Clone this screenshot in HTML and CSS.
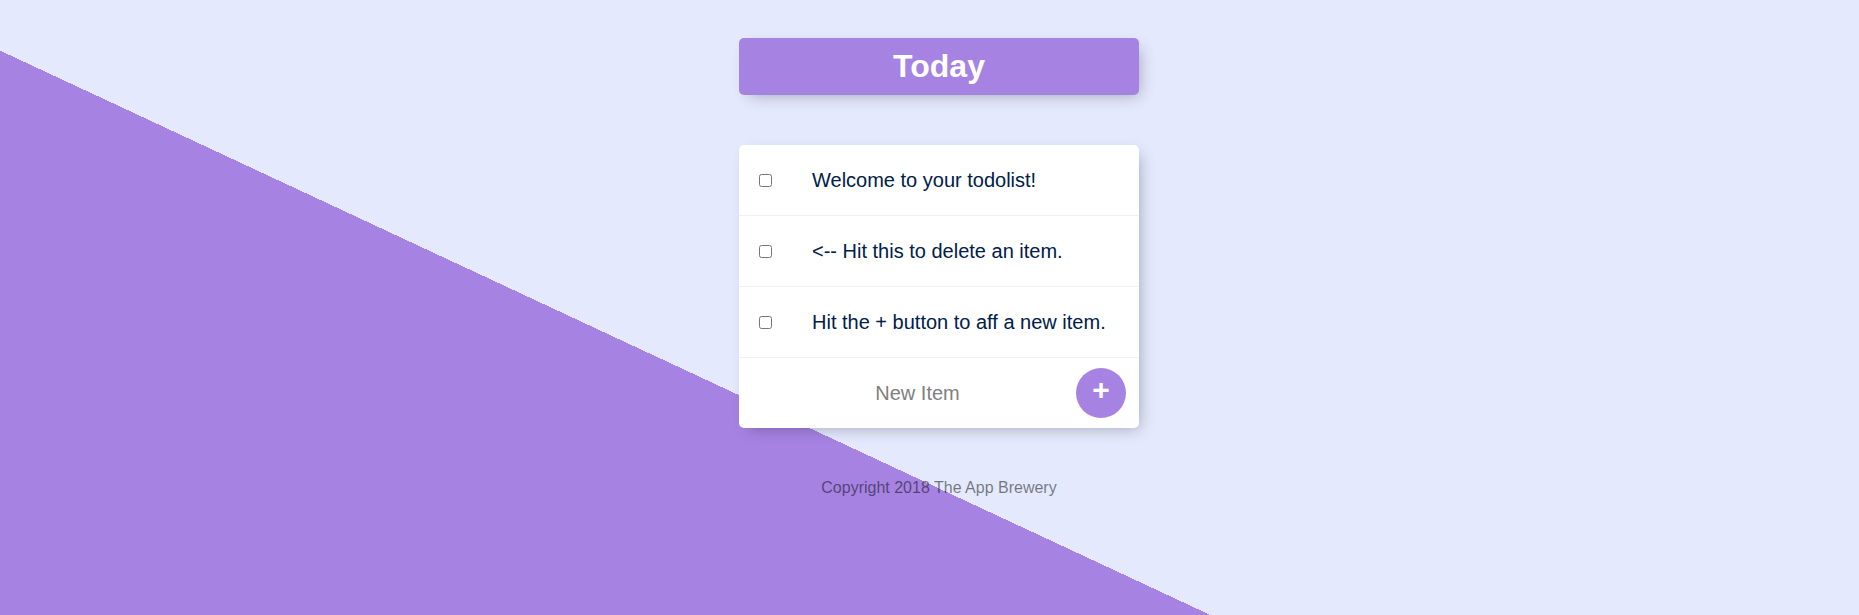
FILE: index.html
```html
<!DOCTYPE html>
<html lang="en">
<head>
<meta charset="utf-8">
<title>To Do List</title>
<link rel="stylesheet" href="styles.css">
</head>
<body>
  <div class="box heading">
    <h1>Today</h1>
  </div>
  <div class="box list">
    <div class="item">
      <input type="checkbox">
      <p>Welcome to your todolist!</p>
    </div>
    <div class="item">
      <input type="checkbox">
      <p>&lt;-- Hit this to delete an item.</p>
    </div>
    <div class="item">
      <input type="checkbox">
      <p>Hit the + button to aff a new item.</p>
    </div>
    <form class="item new-item">
      <input type="text" name="newItem" placeholder="New Item" autocomplete="off">
      <button type="button" name="button">+</button>
    </form>
  </div>
  <footer>Copyright 2018 The App Brewery</footer>
</body>
</html>
```

FILE: styles.css
```css
html {
  background-color: #E4E9FD;
  background-image: linear-gradient(25deg, #A683E3 50%, #E4E9FD 50%);
  background-size: 1859px 968px;
  background-repeat: no-repeat;
  font-family: "Liberation Sans", Arial, Helvetica, sans-serif;
}

body {
  margin: 0;
  padding: 38px 0 0 19px;
}

.box {
  width: 400px;
  margin: 0 auto;
  background: #fff;
  border-radius: 5px;
  box-shadow: 5px 5px 15px -5px rgba(0, 0, 0, 0.3);
}

.heading {
  background-color: #A683E3;
  text-align: center;
  margin-bottom: 50px;
}

.heading h1 {
  margin: 0;
  padding: 10px 10px 11px;
  color: #fff;
  font-size: 32px;
  line-height: 36px;
  font-weight: bold;
}

.list {
  margin-bottom: 51px;
}

.item {
  min-height: 70px;
  display: flex;
  align-items: center;
  border-bottom: 1px solid #F1F1F1;
  margin: 0;
}

.item:last-child {
  border-bottom: 0;
}

.item input[type="checkbox"] {
  margin: 20px;
  width: 13px;
  height: 13px;
}

.item p {
  margin: 0;
  padding: 20px;
  font-size: 20px;
  line-height: 23px;
  color: #00204a;
}

.new-item {
  padding-left: 20px;
}

.new-item input[type="text"] {
  box-sizing: border-box;
  width: 317px;
  height: 60px;
  padding: 0;
  border: none;
  background: transparent;
  text-align: center;
  font-family: "Liberation Sans", Arial, sans-serif;
  font-size: 20px;
  color: #00204a;
}

.new-item input[type="text"]::placeholder {
  color: grey;
  opacity: 1;
}

.new-item input[type="text"]:focus {
  outline: none;
}

.new-item button {
  width: 50px;
  height: 50px;
  padding: 0 0 6px 0;
  border: 0;
  border-radius: 50%;
  background-color: #A683E3;
  color: #fff;
  font-family: "Liberation Sans", Arial, sans-serif;
  font-size: 30px;
  font-weight: bold;
  line-height: 30px;
  cursor: pointer;
}

footer {
  text-align: center;
  color: rgba(0, 0, 0, 0.5);
  font-size: 16px;
  line-height: 18px;
}
```
